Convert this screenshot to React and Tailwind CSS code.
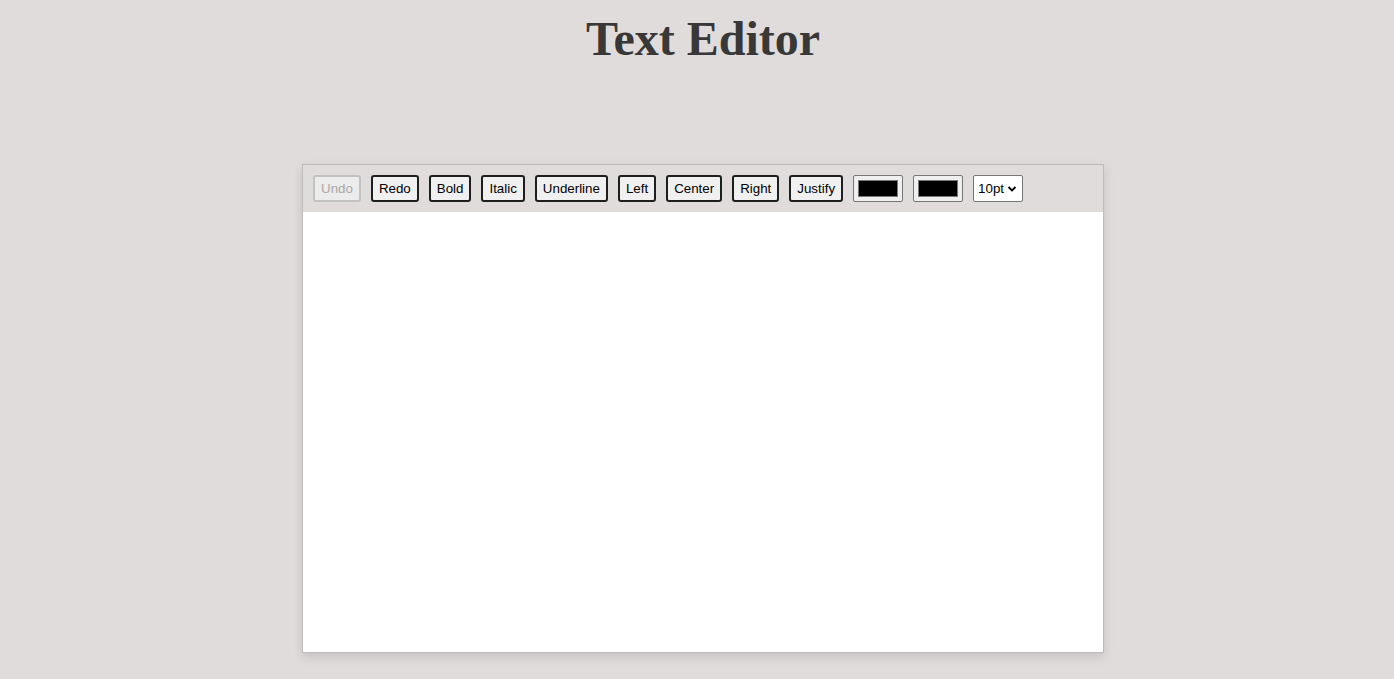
import React from 'react';

const buttons = ['Redo', 'Bold', 'Italic', 'Underline', 'Left', 'Center', 'Right', 'Justify'];

function ColorSwatch() {
  return (
    <div className="w-[50px] h-[27px] border border-[#767676] rounded-[2px] bg-[#efefef] px-[4px] py-[4px] flex">
      <div className="flex-1 bg-black border border-[#777]" />
    </div>
  );
}

export default function App() {
  return (
    <div className="min-h-screen bg-[#e0dcdc] pl-3 pb-10" style={{ fontFamily: 'Arial, "Liberation Sans", sans-serif' }}>
      <h1 className="pt-[11px] text-center text-[48px] leading-[55px] font-bold text-[#383838]" style={{ fontFamily: '"Liberation Serif", "Times New Roman", serif' }}>
        Text Editor
      </h1>

      <div className="mx-auto mt-[98px] w-[802px] border border-[#bcbcbc] shadow-[0_4px_10px_rgba(0,0,0,0.12)]">
        {/* Toolbar */}
        <div className="flex items-center gap-[10px] p-[10px] bg-[#e0dcdc]">
          <button disabled className="h-[27px] px-[6px] border-2 border-[#c2c2c2] rounded-[3px] bg-[#ececec] text-[13.33px] leading-[15px] text-[#a8a8a8]">
            Undo
          </button>
          {buttons.map((b) => (
            <button key={b} className="h-[27px] px-[6px] border-2 border-[#1e1e1e] rounded-[3px] bg-[#f0f0f0] text-[13.33px] leading-[15px] text-black">
              {b}
            </button>
          ))}
          <ColorSwatch />
          <ColorSwatch />
          <div className="w-[50px] h-[27px] border border-[#767676] rounded-[2px] bg-white flex items-center pl-[4px] gap-[3px] text-[13.33px] text-black">
            <span>10pt</span>
            <svg width="10" height="8" viewBox="0 0 10 8" className="mt-[1px]">
              <path d="M1.5 2 L5 5.5 L8.5 2" fill="none" stroke="black" strokeWidth="1.8" />
            </svg>
          </div>
        </div>
        {/* Editor area */}
        <div className="h-[440px] bg-white" contentEditable suppressContentEditableWarning />
      </div>
    </div>
  );
}
